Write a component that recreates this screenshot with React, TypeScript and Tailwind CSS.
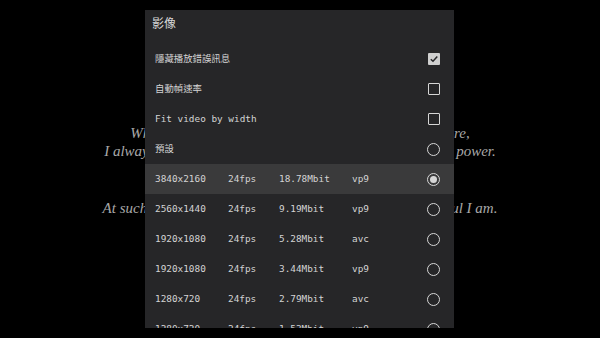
import React from "react";

const mono = { fontFamily: '"DejaVu Sans Mono", "Noto Sans CJK TC", monospace' };

type Stream = { res: string; fps: string; rate: string; codec: string; selected?: boolean };

const streams: Stream[] = [
  { res: "3840x2160", fps: "24fps", rate: "18.78Mbit", codec: "vp9", selected: true },
  { res: "2560x1440", fps: "24fps", rate: "9.19Mbit", codec: "vp9" },
  { res: "1920x1080", fps: "24fps", rate: "5.28Mbit", codec: "avc" },
  { res: "1920x1080", fps: "24fps", rate: "3.44Mbit", codec: "vp9" },
  { res: "1280x720", fps: "24fps", rate: "2.79Mbit", codec: "avc" },
  { res: "1280x720", fps: "24fps", rate: "1.53Mbit", codec: "vp9" },
];

function CheckBox({ checked }: { checked?: boolean }) {
  if (checked) {
    return (
      <div className="w-[12px] h-[12px] rounded-[1px] bg-[#cfcfcf] flex items-center justify-center">
        <svg width="10" height="10" viewBox="0 0 10 10">
          <path d="M1.8 5.2 L4 7.3 L8.3 2.6" fill="none" stroke="#262628" strokeWidth="1.5" />
        </svg>
      </div>
    );
  }
  return <div className="w-[12px] h-[12px] rounded-[1px] border-[1.5px] border-[#d6d6d6]" />;
}

function Radio({ checked }: { checked?: boolean }) {
  return (
    <div className="w-[13px] h-[13px] rounded-full border-[1.5px] border-[#d6d6d6] flex items-center justify-center">
      {checked && <div className="w-[7px] h-[7px] rounded-full bg-[#d6d6d6]" />}
    </div>
  );
}

function Row({ children, selected }: { children: React.ReactNode; selected?: boolean }) {
  return (
    <div
      className={`h-[30px] shrink-0 flex items-center pl-[10px] pr-[14px] text-[9.4px] text-[#d4d4d4] ${
        selected ? "bg-[#3a3a3b]" : ""
      }`}
      style={mono}
    >
      {children}
    </div>
  );
}

export default function App() {
  return (
    <div className="relative w-[600px] h-[338px] bg-black overflow-hidden">
      {/* subtitles behind the dialog */}
      <div
        className="flex flex-col items-center pt-[124px] text-[15px] italic text-[#a8a8a8] leading-[18px] whitespace-nowrap"
        style={{ fontFamily: '"Liberation Serif", serif' }}
      >
        <p>When I look back upon all the things I have done before,</p>
        <p>I always believed I could change the whole world with my power.</p>
        <p className="mt-[39px]">At such moments I realize how small I am, and how grateful I am.</p>
      </div>

      {/* video settings dialog */}
      <div className="absolute left-[145px] top-[10px] w-[309px] h-[318px] bg-[#262628] overflow-hidden flex flex-col">
        <div
          className="h-[34px] shrink-0 pl-[7px] pt-[4px] text-[12px] text-[#d8d8d8]"
          style={{ fontFamily: '"Noto Sans CJK TC", sans-serif' }}
        >
          影像
        </div>
        <Row>
          <span className="flex-1">隱藏播放錯誤訊息</span>
          <CheckBox checked />
        </Row>
        <Row>
          <span className="flex-1">自動幀速率</span>
          <CheckBox />
        </Row>
        <Row>
          <span className="flex-1">Fit video by width</span>
          <CheckBox />
        </Row>
        <Row>
          <span className="flex-1">預設</span>
          <Radio />
        </Row>
        {streams.map((s, i) => (
          <Row key={i} selected={s.selected}>
            <div className="flex-1 grid grid-cols-[73px_51px_73px_1fr]">
              <span>{s.res}</span>
              <span>{s.fps}</span>
              <span>{s.rate}</span>
              <span>{s.codec}</span>
            </div>
            <Radio checked={s.selected} />
          </Row>
        ))}
      </div>
    </div>
  );
}
